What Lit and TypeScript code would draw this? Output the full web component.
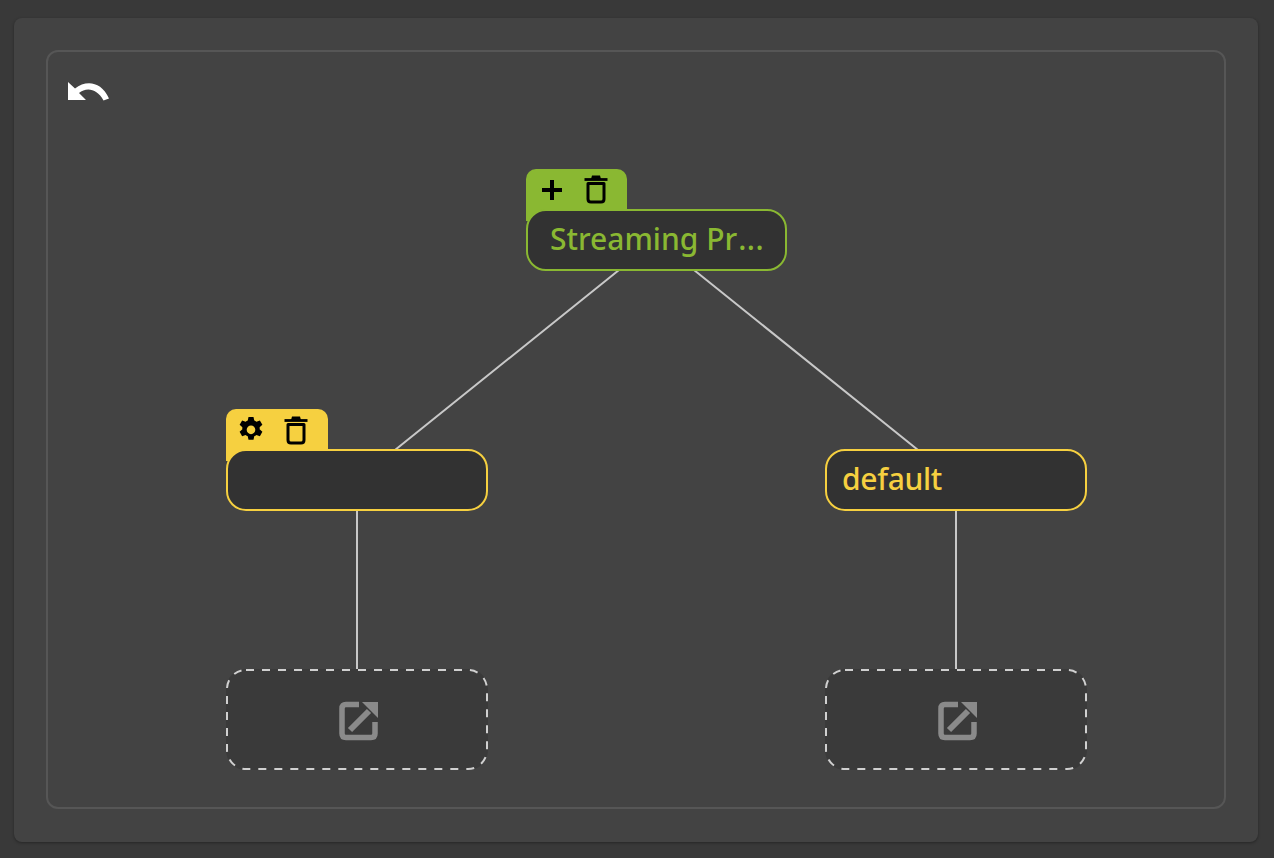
import { LitElement, html, css, svg } from "lit";
import { customElement } from "lit/decorators.js";

const trash = html`<svg class="ic" width="24" height="32" viewBox="0 0 24 32" fill="none" stroke="#000" stroke-width="3">
  <path d="M.5 6.500H23.500" stroke-width="2.800"/><path d="M7 6L8 2.600H16L17 6Z" fill="#000" stroke="none"/>
  <path d="M4 10.500H20V26Q20 29 17 29H7Q4 29 4 26Z" stroke-linejoin="round"/></svg>`;
const plus = html`<svg class="ic" width="24" height="24" viewBox="0 0 24 24"><path d="M10 2H14V10H22V14H14V22H10V14H2V10H10Z" fill="#000"/></svg>`;
const gear = html`<svg class="ic" width="30" height="30" viewBox="0 0 24 24"><path fill="#000" fill-rule="evenodd" d="M10 1.500h4l.6 2.900c.6.2 1.200.5 1.700.9l2.800-1 2 3.400-2.200 2c.1.6.1 1.200 0 1.700l2.200 2-2 3.500-2.800-1c-.5.4-1.100.7-1.700 1l-.6 2.800h-4l-.6-2.800c-.6-.3-1.200-.6-1.700-1l-2.800 1-2-3.500 2.200-2c-.1-.5-.1-1.100 0-1.700l-2.200-2 2-3.400 2.800 1c.5-.4 1.100-.7 1.700-.9zM12 8.400a3.400 3.400 0 1 0 0 6.900 3.400 3.400 0 0 0 0-6.900z"/></svg>`;
const link = html`<svg width="40" height="40" viewBox="0 0 40 40" fill="none" stroke="#8a8a8a" stroke-width="5.500">
  <path d="M20 3.500H7Q3 3.500 3 7.500V32.500Q3 36.500 7 36.500H32Q36 36.500 36 32.500V21"/>
  <path d="M11 29L30 10" stroke-width="6"/><path d="M23 1H39V17Z" fill="#8a8a8a" stroke="none"/></svg>`;

@customElement("app-root")
export class AppRoot extends LitElement {
  static styles = css`
    :host { display: block; height: 858px; background: #393939; font-family: "Noto Sans", "Open Sans", sans-serif; overflow: hidden; }
    .page { height: 858px; box-sizing: border-box; padding: 18px 16px 16px 14px; }
    .card { height: 100%; box-sizing: border-box; padding: 32px 32px 33px 32px; background: #434343; border-radius: 8px; box-shadow: 0 1px 3px rgba(0,0,0,.35); }
    .canvas { position: relative; height: 100%; box-sizing: border-box; border: 2px solid #565656; border-radius: 12px; }
    .lines { position: absolute; left: -48px; top: -52px; width: 1274px; height: 858px; pointer-events: none; }
    .undo { position: absolute; left: 18px; top: 25px; display: block; }
    .item { position: absolute; width: 262px; }
    .green.item { width: 261px; }
    .tab { position: absolute; left: 0; top: -40px; width: 102px; height: 52px; border-radius: 10px 10px 0 0; display: flex; align-items: flex-start; box-sizing: border-box; padding-top: 4px; }
    .ic { display: block; flex: none; }
    .green { --c: #8ab832; }
    .yellow { --c: #f6d040; }
    .tab { background: var(--c); }
    .box { position: relative; box-sizing: border-box; height: 62px; border: 2px solid var(--c); border-radius: 20px; background: #323232; color: var(--c); font-size: 30px; font-weight: 500; letter-spacing: -0.3px; line-height: 56px; padding: 0 15px; white-space: nowrap; }
    .narrow { padding: 0 22px; letter-spacing: 0; }
    .dots { letter-spacing: 0.500px; margin-left: 1px; }
    .plus-tab { gap: 20px; padding-left: 14px; width: 101px; }
    .plus-tab .plus { margin-top: 5px; }
    .gear-tab { gap: 18px; padding-left: 10px; padding-top: 5px; }
    .gear-tab .g { margin-top: 1px; }
    .empty { position: absolute; box-sizing: border-box; width: 262px; height: 101px; border-radius: 20px; background: #3a3a3a; display: flex; align-items: center; justify-content: center; }
    .dash { position: absolute; inset: 0; width: 100%; height: 100%; }
    .empty > svg:last-child { position: relative; top: 1px; left: 2px; }
  `;

  render() {
    return html`<div class="page"><div class="card"><div class="canvas">
      <svg class="lines" viewBox="0 0 1274 858" fill="none" stroke="#c8c8c8" stroke-width="2">
        ${svg`<path d="M619 270L395 450M694 270L918 450M357 510V670M956 510V670"/>`}
      </svg>
      <svg class="undo" width="44" height="26" viewBox="0 0 44 26">
        <path d="M2 5V23H20L13 16C20 10 31 11 37.500 23.500L43 21.500C35 4 20 3 9 11.500Z" fill="#fff"/>
      </svg>
      <div class="item green" style="left:478px;top:157px">
        <div class="tab plus-tab"><span class="plus">${plus}</span>${trash}</div>
        <div class="box narrow">Streaming Pr<span class="dots">...</span></div>
      </div>
      <div class="item yellow" style="left:178px;top:397px">
        <div class="tab gear-tab"><span class="g">${gear}</span>${trash}</div>
        <div class="box"></div>
      </div>
      <div class="item yellow" style="left:777px;top:397px">
        <div class="box">default</div>
      </div>
      ${[178, 777].map(x => html`<div class="empty" style="left:${x}px;top:617px">
        <svg class="dash" viewBox="0 0 262 101" fill="none"><rect x="1" y="1" width="260" height="99" rx="19" stroke="#d0d0d0" stroke-width="2" stroke-dasharray="8 8"/></svg>
        ${link}
      </div>`)}
    </div></div></div>`;
  }
}
